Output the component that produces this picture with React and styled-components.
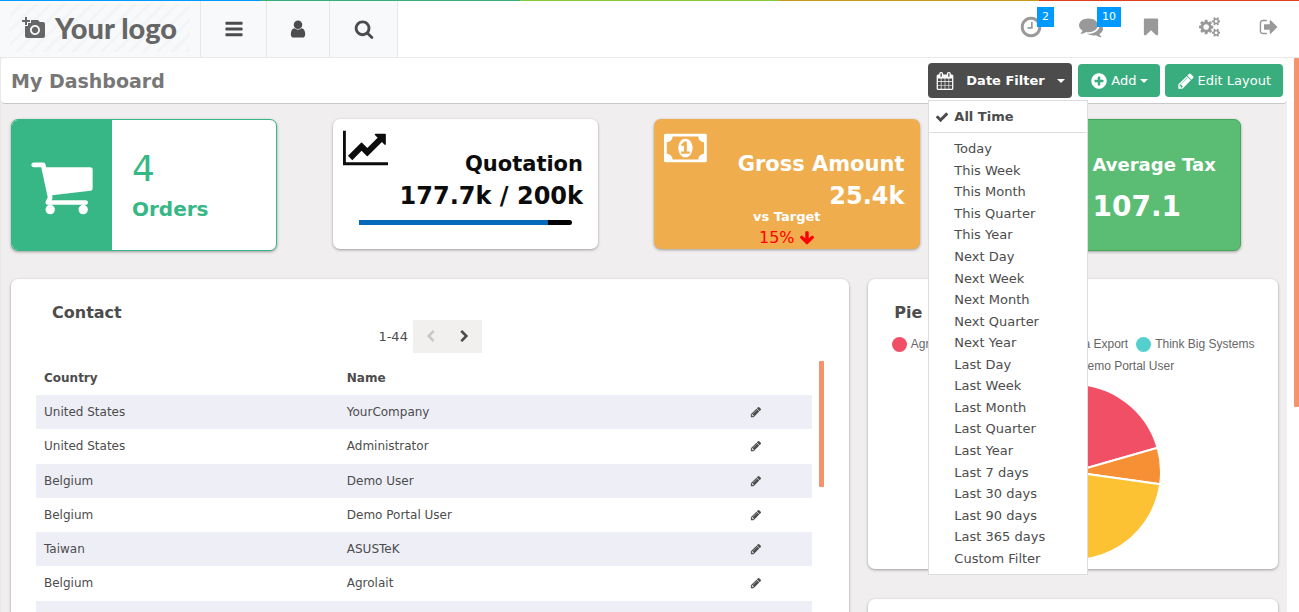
import React from "react";
import styled, { createGlobalStyle, css } from "styled-components";
import { MdAddAPhoto } from "react-icons/md";

const GlobalStyle = createGlobalStyle`
  *, *::before, *::after { box-sizing: border-box; }
  body {
    margin: 0;
    background: #fff;
    color: #4c4c4c;
    font-family: "DejaVu Sans", Verdana, sans-serif;
    font-size: 13px;
  }
  button { font: inherit; color: inherit; border: 0; margin: 0; padding: 0; background: none; cursor: pointer; }
  a { color: inherit; text-decoration: none; }
  ul { list-style: none; margin: 0; padding: 0; }
  h1, h2, p { margin: 0; }
`;

/* ---------- icons ---------- */

const glyphs = {
  bars: "M1664 1344v128q0 26-19 45t-45 19h-1408q-26 0-45-19t-19-45v-128q0-26 19-45t45-19h1408q26 0 45 19t19 45zm0-512v128q0 26-19 45t-45 19h-1408q-26 0-45-19t-19-45v-128q0-26 19-45t45-19h1408q26 0 45 19t19 45zm0-512v128q0 26-19 45t-45 19h-1408q-26 0-45-19t-19-45v-128q0-26 19-45t45-19h1408q26 0 45 19t19 45z",
  user: "M1536 1399q0 109-62.5 187t-150.5 78h-854q-88 0-150.5-78t-62.5-187q0-85 8.5-160.5t31.5-152 58.5-131 94-89 134.5-34.5q131 128 313 128t313-128q76 0 134.5 34.5t94 89 58.5 131 31.5 152 8.5 160.5zm-256-887q0 159-112.5 271.5t-271.5 112.5-271.5-112.5-112.5-271.5 112.5-271.5 271.5-112.5 271.5 112.5 112.5 271.5z",
  search: "M1216 832q0-185-131.5-316.5t-316.5-131.5-316.5 131.5-131.5 316.5 131.5 316.5 316.5 131.5 316.5-131.5 131.5-316.5zm512 832q0 52-38 90t-90 38q-54 0-90-38l-343-342q-179 124-399 124-143 0-273.5-55.5t-225-150-150-225-55.5-273.5 55.5-273.5 150-225 225-150 273.5-55.5 273.5 55.5 225 150 150 225 55.5 273.5q0 220-124 399l343 343q37 37 37 90z",
  clock: "M1024 544v448q0 14-9 23t-23 9h-320q-14 0-23-9t-9-23v-64q0-14 9-23t23-9h224v-352q0-14 9-23t23-9h64q14 0 23 9t9 23zm416 352q0-148-73-273t-198-198-273-73-273 73-198 198-73 273 73 273 198 198 273 73 273-73 198-198 73-273zm224 0q0 209-103 385.5t-279.5 279.5-385.5 103-385.5-103-279.5-279.5-103-385.5 103-385.5 279.5-279.5 385.5-103 385.5 103 279.5 279.5 103 385.5z",
  comments: "M1408 768q0 139-94 257t-256.5 186.5-353.5 68.5q-86 0-176-16-124 88-278 128-36 9-86 16h-3q-11 0-20.5-8t-11.5-21q-1-3-1-6.5t.5-6.5 2-6l2.5-5 3.5-5.5 4-5 4.5-5 4-4.5q5-6 23-25t26-29.5 22.5-29 25-38.5 20.5-44q-124-72-195-177t-71-224q0-139 94-257t256.5-186.5 353.5-68.5 353.5 68.5 256.5 186.5 94 257zm384 256q0 120-71 224.5t-195 176.5q10 24 20.5 44t25 38.5 22.5 29 26 29.5 23 25q1 1 4 4.5t4.5 5 4 5 3.5 5.5l2.5 5 2 6 .5 6.5-1 6.5q-3 14-13 22t-22 7q-50-7-86-16-154-40-278-128-90 16-176 16-271 0-472-132 58 4 88 4 161 0 309-45t264-129q125-92 192-212t67-254q0-77-23-152 129 71 204 178t75 230z",
  bookmark: "M1420 128q23 0 44 9 33 13 52.5 41t19.5 62v1289q0 34-19.5 62t-52.5 41q-19 8-44 8-48 0-83-32l-441-424-441 424q-36 33-83 33-23 0-44-9-33-13-52.5-41t-19.5-62v-1289q0-34 19.5-62t52.5-41q21-9 44-9h1048z",
  cogs: "M832 896q0-106-75-181t-181-75-181 75-75 181 75 181 181 75 181-75 75-181zm768 512q0-52-38-90t-90-38-90 38-38 90q0 53 37.5 90.5t90.5 37.5 90.5-37.5 37.5-90.5zm0-1024q0-52-38-90t-90-38-90 38-38 90q0 53 37.5 90.5t90.5 37.5 90.5-37.5 37.5-90.5zm-384 421v185q0 10-7 19.5t-16 10.5l-155 24q-11 35-32 76 34 48 90 115 7 11 7 20 0 12-7 19-23 30-82.5 89.5t-78.5 59.5q-11 0-21-7l-115-90q-37 19-77 31-11 108-23 155-7 24-30 24h-186q-11 0-20-7.5t-10-17.5l-23-153q-34-10-75-31l-118 89q-7 7-20 7-11 0-21-8-144-133-144-160 0-9 7-19 10-14 41-53t47-61q-23-44-35-82l-152-24q-10-1-17-9.5t-7-19.5v-185q0-10 7-19.5t16-10.5l155-24q11-35 32-76-34-48-90-115-7-11-7-20 0-12 7-20 22-30 82-89t79-59q11 0 21 7l115 90q34-18 77-32 11-108 23-154 7-24 30-24h186q11 0 20 7.5t10 17.5l23 153q34 10 75 31l118-89q8-7 20-7 11 0 21 8 144 133 144 160 0 8-7 19-12 16-42 54t-45 60q23 48 34 82l152 23q10 2 17 10.5t7 19.5zm640 533v140q0 16-149 31-12 27-30 52 51 113 51 138 0 4-4 7-122 71-124 71-8 0-46-47t-52-68q-20 2-30 2t-30-2q-14 21-52 68t-46 47q-2 0-124-71-4-3-4-7 0-25 51-138-18-25-30-52-149-15-149-31v-140q0-16 149-31 13-29 30-52-51-113-51-138 0-4 4-7 4-2 35-20t59-34 30-16q8 0 46 46.5t52 67.5q20-2 30-2t30 2q51-71 92-112l6-2q4 0 124 70 4 3 4 7 0 25-51 138 17 23 30 52 149 15 149 31zm0-1024v140q0 16-149 31-12 27-30 52 51 113 51 138 0 4-4 7-122 71-124 71-8 0-46-47t-52-68q-20 2-30 2t-30-2q-14 21-52 68t-46 47q-2 0-124-71-4-3-4-7 0-25 51-138-18-25-30-52-149-15-149-31v-140q0-16 149-31 13-29 30-52-51-113-51-138 0-4 4-7 4-2 35-20t59-34 30-16q8 0 46 46.5t52 67.5q20-2 30-2t30 2q51-71 92-112l6-2q4 0 124 70 4 3 4 7 0 25-51 138 17 23 30 52 149 15 149 31z",
  signOut: "M704 1440q0 4 1 20t.5 26.5-3 23.5-10 19.5-20.5 6.5h-320q-119 0-203.5-84.5t-84.5-203.5v-704q0-119 84.5-203.5t203.5-84.5h320q13 0 22.5 9.5t9.5 22.5q0 4 1 20t.5 26.5-3 23.5-10 19.5-20.5 6.5h-320q-66 0-113 47t-47 113v704q0 66 47 113t113 47h312l11.5 1 11.5 3 8 5.5 7 9 2 13.5zm928-544q0 26-19 45l-544 544q-19 19-45 19t-45-19-19-45v-288h-448q-26 0-45-19t-19-45v-384q0-26 19-45t45-19h448v-288q0-26 19-45t45-19 45 19l544 544q19 19 19 45z",
  calendar: "M192 1664h288v-288h-288v288zm352 0h320v-288h-320v288zm-352-352h288v-320h-288v320zm352 0h320v-320h-320v320zm-352-384h288v-288h-288v288zm736 736h320v-288h-320v288zm-384-736h320v-288h-320v288zm768 736h288v-288h-288v288zm-384-352h320v-320h-320v320zm-352-864v-288q0-13-9.5-22.5t-22.5-9.5h-64q-13 0-22.5 9.5t-9.5 22.5v288q0 13 9.5 22.5t22.5 9.5h64q13 0 22.5-9.5t9.5-22.5zm736 864h288v-320h-288v320zm-384-384h320v-288h-320v288zm384 0h288v-288h-288v288zm32-480v-288q0-13-9.5-22.5t-22.5-9.5h-64q-13 0-22.5 9.5t-9.5 22.5v288q0 13 9.5 22.5t22.5 9.5h64q13 0 22.5-9.5t9.5-22.5zm384-64v1280q0 52-38 90t-90 38h-1408q-52 0-90-38t-38-90v-1280q0-52 38-90t90-38h128v-96q0-66 47-113t113-47h64q66 0 113 47t47 113v96h384v-96q0-66 47-113t113-47h64q66 0 113 47t47 113v96h128q52 0 90 38t38 90z",
  plusCircle: "M1344 960v-128q0-26-19-45t-45-19h-256v-256q0-26-19-45t-45-19h-128q-26 0-45 19t-19 45v256h-256q-26 0-45 19t-19 45v128q0 26 19 45t45 19h256v256q0 26 19 45t45 19h128q26 0 45-19t19-45v-256h256q26 0 45-19t19-45zm320-64q0 209-103 385.5t-279.5 279.5-385.5 103-385.5-103-279.5-279.5-103-385.5 103-385.5 279.5-279.5 385.5-103 385.5 103 279.5 279.5 103 385.5z",
  pencil: "M491 1536l91-91-235-235-91 91v107h128v128h107zm523-928q0-22-22-22-10 0-17 7l-542 542q-7 7-7 17 0 22 22 22 10 0 17-7l542-542q7-7 7-17zm-54-192l416 416-832 832h-416v-416zm683 96q0 53-37 90l-166 166-416-416 166-165q36-38 90-38 53 0 91 38l235 234q37 39 37 91z",
  check: "M1671 566q0 40-28 68l-724 724-136 136q-28 28-68 28t-68-28l-136-136-362-362q-28-28-28-68t28-68l136-136q28-28 68-28t68 28l294 295 656-657q28-28 68-28t68 28l136 136q28 28 28 68z",
  lineChart: "M2048 1536v128h-2048v-1536h128v1408h1920zm-128-1248v435q0 21-19.5 29.5t-35.5-7.5l-121-121-633 633q-10 10-23 10t-23-10l-233-233-416 416-192-192 585-585q10-10 23-10t23 10l233 233 464-464-121-121q-16-16-7.5-35.5t29.5-19.5h435q14 0 23 9t9 23z",
  money: "M768 1152h384v-96h-128v-448h-114l-148 137 77 80q42-37 55-57h2v288h-128v96zm512-256q0 70-21 142t-59.5 134-101.5 101-138 39-138-39-101.5-101-59.5-134-21-142 21-142 59.5-134 101.5-101 138-39 138 39 101.5 101 59.5 134 21 142zm512 256v-512q-106 0-181-75t-75-181h-1152q0 106-75 181t-181 75v512q106 0 181 75t75 181h1152q0-106 75-181t181-75zm128-832v1152q0 26-19 45t-45 19h-1792q-26 0-45-19t-19-45v-1152q0-26 19-45t45-19h1792q26 0 45 19t19 45z",
  arrowDown: "M1675 832q0 53-37 90l-651 652q-39 37-91 37-53 0-90-37l-651-652q-38-36-38-90 0-53 38-91l74-75q39-37 91-37 53 0 90 37l294 294v-704q0-52 38-90t90-38h128q52 0 90 38t38 90v704l294-294q37-37 90-37 52 0 91 37l75 75q37 39 37 91z",
  chevronLeft: "M1427 301l-531 531 531 531q19 19 19 45t-19 45l-166 166q-19 19-45 19t-45-19l-742-742q-19-19-19-45t19-45l742-742q19-19 45-19t45 19l166 166q19 19 19 45t-19 45z",
  chevronRight: "M1363 877l-742 742q-19 19-45 19t-45-19l-166-166q-19-19-19-45t19-45l531-531-531-531q-19-19-19-45t19-45l166-166q19-19 45-19t45 19l742 742q19 19 19 45t-19 45z",
  cart: "M704 1536q0 52-38 90t-90 38-90-38-38-90 38-90 90-38 90 38 38 90zm896 0q0 52-38 90t-90 38-90-38-38-90 38-90 90-38 90 38 38 90zm128-1088v512q0 24-16.5 42.5t-40.5 21.5l-1044 122q13 60 13 70 0 16-24 64h920q26 0 45 19t19 45-19 45-45 19h-1024q-26 0-45-19t-19-45q0-11 8-31.5t16-36 21.5-40 15.5-29.5l-177-823h-204q-26 0-45-19t-19-45 19-45 45-19h256q16 0 28.5 6.5t19.5 15.5 13 24.5 8 26 5.5 29.5 4.5 26h1201q26 0 45 19t19 45z",
};

const viewBoxes = {
  cogs: "-64 0 1920 1792",
  lineChart: "0 0 2048 1792",
  money: "0 0 1920 1792",
};

const Svg = styled.svg`
  display: block;
  flex: none;
  height: ${(p) => p.$size}px;
  fill: currentColor;
`;

function Icon({ name, size }) {
  return (
    <Svg $size={size} viewBox={viewBoxes[name] || "0 0 1792 1792"} aria-hidden="true">
      <path d={glyphs[name]} />
    </Svg>
  );
}

/* ---------- page frame ---------- */

const Page = styled.div`
  display: flex;
  flex-direction: column;
  height: 100vh;
  overflow: hidden;
`;

const Rainbow = styled.div`
  flex: none;
  height: 1px;
  background: linear-gradient(
    to right,
    #0099ff 20%, #3aad7f 20% 40%, #86c93a 40% 60%, #c89a1c 60% 80%, #e0401c 80%
  );
`;

const Header = styled.header`
  display: flex;
  flex: none;
  justify-content: space-between;
  height: 57px;
  border-bottom: 1px solid #e9e9e9;
`;

const HeaderNav = styled.nav`
  display: flex;
  background: #f8f9fb;
`;

const Logo = styled.a`
  display: flex;
  align-items: center;
  gap: 9px;
  width: 180px;
  margin: 3px 10px 5px;
  padding: 0 0 0 12px;
  color: #666;
  font-family: Lato, sans-serif;
  font-size: 29px;
  font-weight: 900;
  line-height: 32px;
  white-space: nowrap;
  background: repeating-linear-gradient(135deg, #f8f9fb 0 7px, #f3f4f5 7px 10px);
`;

const NavButton = styled.button`
  display: flex;
  align-items: center;
  justify-content: center;
  width: ${(p) => p.$width}px;
  border-left: 1px solid #e6e7e9;
  &:last-child { border-right: 1px solid #e6e7e9; }
`;

const Systray = styled.div`
  display: flex;
  align-items: center;
  gap: 36px;
  padding: 0 19px 4px 0;
  color: #999;
`;

const TrayButton = styled.button`
  position: relative;
  display: flex;
  justify-content: center;
  min-width: 23px;
`;

const Badge = styled.span`
  position: absolute;
  left: 50%;
  bottom: 50%;
  margin-left: 6px;
  padding: 0 5px;
  background: #0099ff;
  color: #fff;
  font-size: 11px;
  line-height: 20px;
`;

const Body = styled.div`
  display: flex;
  flex: 1;
  min-height: 0;
`;

const Content = styled.main`
  flex: 1;
  min-width: 0;
  background: #f0eeee;
  border-left: 1px solid #e9e9e9;
`;

const Gutter = styled.div`
  display: flex;
  justify-content: flex-end;
  flex: none;
  width: 12px;
`;

const Thumb = styled.div`
  flex: none;
  width: 5px;
  height: ${(p) => p.$length};
  border-radius: 1px;
  background: #f4936c;
`;

/* ---------- dashboard bar ---------- */

const Bar = styled.div`
  display: flex;
  align-items: center;
  justify-content: space-between;
  height: 46px;
  padding: 0 4px 0 10px;
  background: #fff;
  border-bottom: 1px solid #c8c8c8;
  border-radius: 4px;
`;

const Title = styled.h1`
  color: #777;
  font-size: 19px;
  line-height: 24px;
`;

const Actions = styled.div`
  display: flex;
  align-items: center;
`;

const ActionButton = styled.button`
  display: flex;
  align-items: center;
  gap: 3px;
  height: 33px;
  padding: 0 12px;
  margin-left: 5px;
  border-radius: 4px;
  background: #3aad7f;
  color: #fff;
  white-space: nowrap;
`;

const FilterButton = styled(ActionButton)`
  gap: 12px;
  width: 144px;
  height: 35px;
  padding: 0 8px;
  margin: 0 1px 0 0;
  background: #4c4c4c;
  font-weight: bold;
`;

const Caret = styled.span`
  border: 4px solid transparent;
  border-top-color: currentColor;
  border-bottom: 0;
`;

const Dropdown = styled.div`
  position: relative;
`;

const Menu = styled.ul`
  position: absolute;
  z-index: 10;
  top: 37px;
  left: 0;
  width: 160px;
  padding-bottom: 5px;
  background: #fff;
  border: 1px solid #ddd;
`;

const MenuOptions = styled.ul`
  display: grid;
  grid-auto-rows: 1fr;
  height: 431px;
  margin-top: 5px;
`;

const MenuItem = styled.button`
  display: flex;
  align-items: center;
  width: 100%;
  height: 100%;
  padding-left: 25px;
  text-align: left;
  ${(p) => p.$selected && css`
    gap: 5px;
    height: 32px;
    padding-left: 6px;
    border-bottom: 1px solid #ddd;
    font-weight: bold;
  `}
`;

/* ---------- cards ---------- */

const TileRow = styled.div`
  display: grid;
  grid-template-columns: repeat(4, 1fr);
  align-items: start;
  padding-top: 15px;
  height: 175px;
`;

const Card = styled.section`
  background: #fff;
  border-radius: 7px;
  box-shadow: 0 1px 3px rgba(0, 0, 0, 0.35);
`;

const Tile = styled(Card)`
  display: flex;
  margin: 0 46px 0 10px;
  height: ${(p) => (p.$edge ? 132 : 130)}px;
  overflow: hidden;
  background: ${(p) => p.$fill || "#fff"};
  color: ${(p) => p.$ink};
  ${(p) => p.$edge && css`border: 1px solid ${p.$edge};`}
`;

const TileIcon = styled.div`
  display: flex;
  align-items: center;
  justify-content: center;
  width: 100px;
  padding-top: 2px;
  flex: none;
  background: ${(p) => p.$fill};
  color: #fff;
`;

const TileText = styled.div`
  display: flex;
  flex-direction: column;
  justify-content: center;
  padding: 4px 0 0 ${(p) => p.$indent}px;
  white-space: nowrap;
`;

const Count = styled.p`
  font-size: 36px;
  line-height: 44px;
`;

const TileName = styled.h2`
  font-size: ${(p) => p.$size}px;
  line-height: ${(p) => p.$line}px;
`;

const BigNumber = styled.p`
  font-size: 28px;
  font-weight: bold;
  line-height: 44px;
`;

const Kpi = styled.div`
  flex: 1;
  display: flex;
  flex-direction: column;
  align-items: stretch;
  padding: 9px 15px 0 10px;
  > svg { align-self: flex-start; }
`;

const KpiFigures = styled.div`
  margin-top: -20px;
  text-align: right;
  white-space: nowrap;
`;

const KpiName = styled.h2`
  font-size: 21px;
  line-height: 32px;
`;

const KpiValue = styled.p`
  font-size: 24px;
  font-weight: bold;
  line-height: 32px;
`;

const Progress = styled.div`
  height: 5px;
  margin: 8px 11px 0 16px;
  border-radius: 0 3px 3px 0;
  background: #000;
  overflow: hidden;
`;

const ProgressFill = styled.div`
  height: 100%;
  background: #0468bb;
`;

const Target = styled.div`
  display: flex;
  flex-direction: column;
  align-items: center;
  margin-top: -3px;
  padding-left: 5px;
  font-weight: bold;
  line-height: 16px;
`;

const Change = styled.p`
  display: flex;
  align-items: center;
  gap: 4px;
  color: #f00;
  font-size: 16px;
  font-weight: normal;
  line-height: 26px;
`;

/* ---------- panels ---------- */

const PanelRow = styled.div`
  display: grid;
  grid-template-columns: 2fr 1fr;
`;

const Panel = styled(Card)`
  margin: 0 9px 0 10px;
  padding: ${(p) => (p.$wide ? "22px 25px" : "22px 16px 9px")};
  height: ${(p) => p.$height}px;
`;

const Column = styled.div`
  display: flex;
  flex-direction: column;
  gap: 30px;
`;

const PanelTitle = styled.h2`
  padding-left: ${(p) => p.$indent}px;
  font-size: 16px;
  line-height: 24px;
`;

const Pager = styled.div`
  display: flex;
  align-items: center;
  justify-content: center;
  margin: -5px 0 8px;
`;

const PagerButton = styled.button`
  display: flex;
  align-items: center;
  justify-content: center;
  width: ${(p) => p.$width}px;
  height: 33px;
  background: #f1f0ee;
  &:disabled { color: #c8c8c8; }
  &:first-of-type { margin-left: 5px; }
`;

const TableArea = styled.div`
  display: flex;
  gap: 7px;
`;

const Table = styled.table`
  flex: 1;
  height: 308px;
  border-collapse: collapse;
  table-layout: fixed;
  font-size: 12px;
  line-height: 16px;
  th, td { padding: 0 8px; text-align: left; }
  th { height: 34px; }
  tbody tr:nth-child(odd) { background: #eeeef7; }
  th:nth-child(1) { width: 39%; }
  th:nth-child(3) { width: 9%; }
`;

const RowButton = styled.button`
  display: flex;
`;

const Legend = styled.ul`
  display: flex;
  flex-wrap: wrap;
  justify-content: center;
  column-gap: 8px;
  margin-top: 8px;
  color: #666;
  font-family: "Liberation Sans", Arial, sans-serif;
  font-size: 12px;
  line-height: 22px;
`;

const LegendItem = styled.li`
  display: flex;
  align-items: center;
  gap: 4px;
  &::before {
    content: "";
    width: 15px;
    height: 15px;
    border-radius: 50%;
    background: ${(p) => p.$color};
  }
`;

const Pie = styled.svg`
  display: block;
  width: 176px;
  height: 176px;
  margin: 7px auto 0;
`;

/* ---------- data ---------- */

const periods = [
  "Today", "This Week", "This Month", "This Quarter", "This Year",
  "Next Day", "Next Week", "Next Month", "Next Quarter", "Next Year",
  "Last Day", "Last Week", "Last Month", "Last Quarter", "Last Year",
  "Last 7 days", "Last 30 days", "Last 90 days", "Last 365 days", "Custom Filter",
];

const contacts = [
  ["United States", "YourCompany"],
  ["United States", "Administrator"],
  ["Belgium", "Demo User"],
  ["Belgium", "Demo Portal User"],
  ["Taiwan", "ASUSTeK"],
  ["Belgium", "Agrolait"],
  ["China", "China Export"],
  ["United States", "Think Big Systems"],
];

const partners = [
  ["Agrolait", "#f14f66"],
  ["ASUSTeK", "#f79034"],
  ["China Export", "#fcc234"],
  ["Think Big Systems", "#53d0cd"],
  ["Demo User", "#4a9fe8"],
  ["Demo Portal User", "#9a6bf0"],
];

/* start and end in degrees, clockwise from three o'clock */
const slices = [
  [-90, -16, "#f14f66"],
  [-16, 8, "#f79034"],
  [8, 120, "#fcc234"],
  [120, 190, "#53d0cd"],
  [190, 235, "#4a9fe8"],
  [235, 270, "#9a6bf0"],
];

function slicePath([from, to]) {
  const point = (deg) => {
    const a = (deg * Math.PI) / 180;
    return `${88 + 88 * Math.cos(a)} ${88 + 88 * Math.sin(a)}`;
  };
  return `M88 88L${point(from)}A88 88 0 0 1 ${point(to)}Z`;
}

export default function App() {
  return (
    <Page>
      <GlobalStyle />
      <Rainbow />
      <Header>
        <HeaderNav>
          <Logo href="#home"><MdAddAPhoto size={24} />Your logo</Logo>
          <NavButton $width={66} aria-label="Menu"><Icon name="bars" size={20} /></NavButton>
          <NavButton $width={63} aria-label="User"><Icon name="user" size={20} /></NavButton>
          <NavButton $width={69} aria-label="Search"><Icon name="search" size={20} /></NavButton>
        </HeaderNav>
        <Systray>
          <TrayButton aria-label="Activities"><Icon name="clock" size={24} /><Badge>2</Badge></TrayButton>
          <TrayButton aria-label="Messages"><Icon name="comments" size={24} /><Badge>10</Badge></TrayButton>
          <TrayButton aria-label="Bookmarks"><Icon name="bookmark" size={20} /></TrayButton>
          <TrayButton aria-label="Settings"><Icon name="cogs" size={20} /></TrayButton>
          <TrayButton aria-label="Log out"><Icon name="signOut" size={20} /></TrayButton>
        </Systray>
      </Header>
      <Body>
        <Content>
          <Bar>
            <Title>My Dashboard</Title>
            <Actions>
              <Dropdown>
                <FilterButton aria-expanded="true">
                  <Icon name="calendar" size={18} />Date Filter<Caret />
                </FilterButton>
                <Menu>
                  <li><MenuItem $selected><Icon name="check" size={14} />All Time</MenuItem></li>
                  <li>
                    <MenuOptions>
                      {periods.map((name) => <li key={name}><MenuItem>{name}</MenuItem></li>)}
                    </MenuOptions>
                  </li>
                </Menu>
              </Dropdown>
              <ActionButton><Icon name="plusCircle" size={18} />Add<Caret /></ActionButton>
              <ActionButton><Icon name="pencil" size={18} />Edit Layout</ActionButton>
            </Actions>
          </Bar>

          <TileRow>
            <Tile $edge="#36b785" $ink="#36b785">
              <TileIcon $fill="#36b785"><Icon name="cart" size={66} /></TileIcon>
              <TileText $indent={20}>
                <Count>4</Count>
                <TileName $size={20} $line={36}>Orders</TileName>
              </TileText>
            </Tile>
            <Tile $ink="#0c0c0c">
              <Kpi>
                <Icon name="lineChart" size={40} />
                <KpiFigures>
                  <KpiName>Quotation</KpiName>
                  <KpiValue>177.7k / 200k</KpiValue>
                </KpiFigures>
                <Progress><ProgressFill style={{ width: `${(177.7 / 200) * 100}%` }} /></Progress>
              </Kpi>
            </Tile>
            <Tile $fill="#f0ad4e" $ink="#fff">
              <Kpi>
                <Icon name="money" size={40} />
                <KpiFigures>
                  <KpiName>Gross Amount</KpiName>
                  <KpiValue>25.4k</KpiValue>
                </KpiFigures>
                <Target>
                  vs Target
                  <Change>15% <Icon name="arrowDown" size={16} /></Change>
                </Target>
              </Kpi>
            </Tile>
            <Tile $fill="#5bbd74" $edge="#43a85c" $ink="#fff">
              <TileIcon $fill="#5bbd74"><Icon name="money" size={66} /></TileIcon>
              <TileText $indent={16}>
                <TileName $size={18} $line={40}>Average Tax</TileName>
                <BigNumber>107.1</BigNumber>
              </TileText>
            </Tile>
          </TileRow>

          <PanelRow>
            <Panel $wide $height={420}>
              <PanelTitle $indent={16}>Contact</PanelTitle>
              <Pager>
                1-44
                <PagerButton $width={35} disabled aria-label="Previous"><Icon name="chevronLeft" size={13} /></PagerButton>
                <PagerButton $width={34} aria-label="Next"><Icon name="chevronRight" size={13} /></PagerButton>
              </Pager>
              <TableArea>
                <Table>
                  <thead>
                    <tr><th>Country</th><th>Name</th><th aria-label="Edit" /></tr>
                  </thead>
                  <tbody>
                    {contacts.map(([country, name]) => (
                      <tr key={name}>
                        <td>{country}</td>
                        <td>{name}</td>
                        <td><RowButton aria-label={`Edit ${name}`}><Icon name="pencil" size={12} /></RowButton></td>
                      </tr>
                    ))}
                  </tbody>
                </Table>
                <Thumb $length="126px" />
              </TableArea>
            </Panel>
            <Column>
              <Panel $height={290}>
                <PanelTitle $indent={10}>Pie Chart</PanelTitle>
                <Legend>
                  {partners.map(([name, color]) => <LegendItem key={name} $color={color}>{name}</LegendItem>)}
                </Legend>
                <Pie viewBox="0 0 176 176" role="img" aria-label="Pie chart of partners">
                  {slices.map((s) => (
                    <path key={s[0]} d={slicePath(s)} fill={s[2]} stroke="#fff" strokeWidth="2" />
                  ))}
                </Pie>
              </Panel>
              <Panel $height={101} />
            </Column>
          </PanelRow>
        </Content>
        <Gutter><Thumb $length="63%" /></Gutter>
      </Body>
    </Page>
  );
}
